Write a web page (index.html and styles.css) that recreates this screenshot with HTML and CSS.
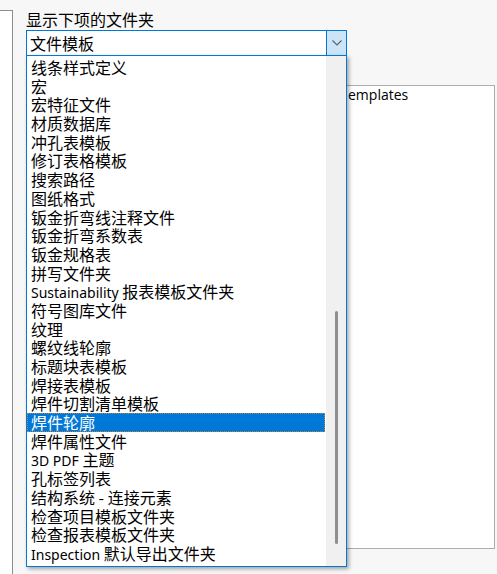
FILE: index.html
```html
<!DOCTYPE html>
<html lang="zh-CN">
<head>
<meta charset="utf-8">
<title>显示下项的文件夹</title>
<link rel="stylesheet" href="styles.css">
</head>
<body>
<div class="page">
  <div class="leftpane"></div>
  <div class="main">
    <div class="label">显示下项的文件夹</div>
    <div class="combo">
      <div class="combo-text">文件模板</div>
      <div class="combo-btn">
        <svg width="10" height="6" viewBox="0 0 10 6"><polyline points="0.5,0.5 5,5 9.5,0.5" fill="none" stroke="#606060" stroke-width="1.1"/></svg>
      </div>
      <div class="dropdown">
        <ul class="items">
          <li>线条样式定义</li>
          <li>宏</li>
          <li>宏特征文件</li>
          <li>材质数据库</li>
          <li>冲孔表模板</li>
          <li>修订表格模板</li>
          <li>搜索路径</li>
          <li>图纸格式</li>
          <li>钣金折弯线注释文件</li>
          <li>钣金折弯系数表</li>
          <li>钣金规格表</li>
          <li>拼写文件夹</li>
          <li><span class="lat">Sustainability</span> 报表模板文件夹</li>
          <li>符号图库文件</li>
          <li>纹理</li>
          <li>螺纹线轮廓</li>
          <li>标题块表模板</li>
          <li>焊接表模板</li>
          <li>焊件切割清单模板</li>
          <li class="selected">焊件轮廓</li>
          <li>焊件属性文件</li>
          <li><span class="lat">3D PDF</span> 主题</li>
          <li>孔标签列表</li>
          <li>结构系统 - 连接元素</li>
          <li>检查项目模板文件夹</li>
          <li>检查报表模板文件夹</li>
          <li><span class="lat">Inspection</span> 默认导出文件夹</li>
        </ul>
        <div class="sb"><div class="thumb"></div></div>
      </div>
    </div>
    <div class="pathbox"><div class="path">emplates</div></div>
  </div>
</div>
</body>
</html>
```

FILE: styles.css
```css
html, body {
  margin: 0;
  padding: 0;
}
body {
  background: #f7f7f7;
  font-family: "Noto Sans CJK SC", "Noto Sans", sans-serif;
  color: #000;
}
.page {
  display: flex;
  width: 497px;
  height: 574px;
  overflow: hidden;
}
.leftpane {
  width: 12px;
  margin-top: 10px;
  background: #ffffff;
  border-top: 1px solid #8c8c8c;
  border-right: 1px solid #8c8c8c;
  flex: none;
}
.main {
  flex: 1;
  padding: 9px 0 0 13px;
}
.label {
  font-size: 16px;
  line-height: 20px;
  height: 20px;
}
.combo {
  position: relative;
  margin-top: 1px;
  width: 319px;
  height: 24px;
  border: 1px solid #0078d7;
  background: #ffffff;
  display: flex;
}
.combo-text {
  flex: 1;
  padding-left: 3px;
  font-size: 16px;
  line-height: 24px;
}
.combo-btn {
  width: 19px;
  border-left: 1px solid #0078d7;
  background: #cce4f7;
  display: flex;
  align-items: center;
  justify-content: center;
}
.combo-btn svg {
  display: block;
  margin-left: 1px;
}
.dropdown {
  position: absolute;
  top: 24px;
  left: -1px;
  width: 319px;
  height: 510px;
  border: 1px solid #0078d7;
  background: #ffffff;
  display: flex;
  box-shadow: 2px 2px 4px rgba(0, 0, 0, 0.35);
  z-index: 2;
}
.items {
  list-style: none;
  margin: 0;
  padding: 2px 0 0 0;
  flex: 1;
}
.items li {
  height: 18.7px;
  line-height: 18.7px;
  font-size: 16px;
  padding-left: 4px;
  white-space: nowrap;
  box-sizing: border-box;
}
.items li .lat {
  font-family: "Noto Sans", "Open Sans", sans-serif;
  font-size: 14px;
}
.items li.selected {
  background: #0078d7;
  color: #ffffff;
  border: 1px dotted #c08040;
  padding-left: 3px;
  line-height: 16.7px;
  margin-right: 1px;
}
.sb {
  width: 20px;
  background: #f0f0f0;
  padding-top: 255px;
  box-sizing: border-box;
}
.thumb {
  width: 3px;
  height: 233px;
  margin: 0 auto;
  background: #8f8f8f;
  border-radius: 2px;
}
.pathbox {
  margin: 29px 2px 0 317px;
  height: 462px;
  border: 1px solid #adadad;
  background: #ffffff;
}
.path {
  padding-left: 4px;
  font-family: "Open Sans", "Noto Sans", sans-serif;
  font-size: 14px;
  line-height: 18px;
}
```
